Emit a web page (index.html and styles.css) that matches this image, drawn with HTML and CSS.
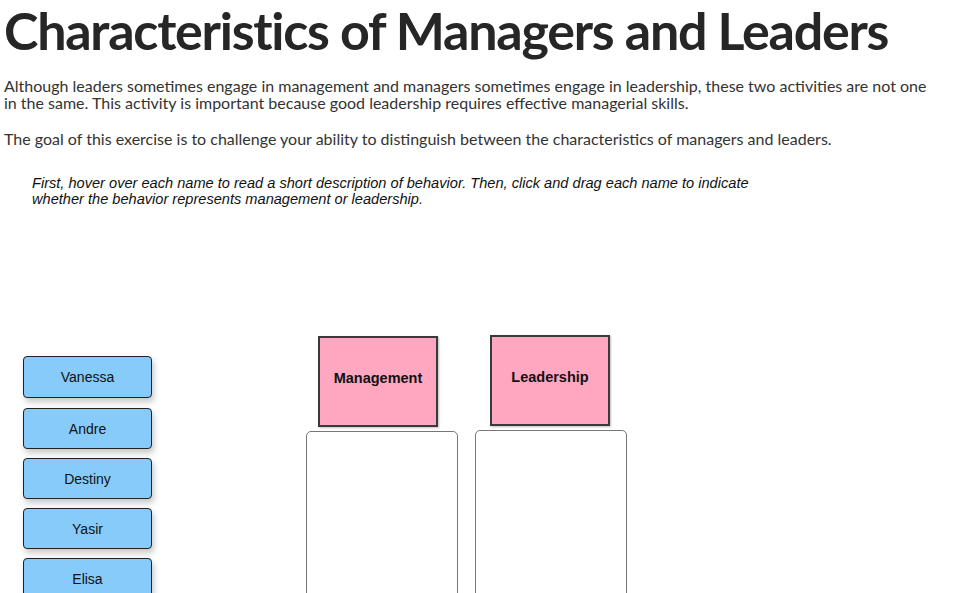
FILE: index.html
```html
<!DOCTYPE html>
<html>
<head>
<meta charset="utf-8">
<link rel="stylesheet" href="styles.css">
</head>
<body>
<h1 class="title">Characteristics of Managers and Leaders</h1>
<p class="intro">Although leaders sometimes engage in management and managers sometimes engage in leadership, these two activities are not one in the same. This activity is important because good leadership requires effective managerial skills.</p>
<p class="intro goal">The goal of this exercise is to challenge your ability to distinguish between the characteristics of managers and leaders.</p>
<p class="instructions">First, hover over each name to read a short description of behavior. Then, click and drag each name to indicate whether the behavior represents management or leadership.</p>
<div class="stage">
  <div class="names">
    <div class="name first">Vanessa</div>
    <div class="name">Andre</div>
    <div class="name">Destiny</div>
    <div class="name">Yasir</div>
    <div class="name">Elisa</div>
  </div>
  <div class="category cat-management">
    <div class="cat-head mgmt"><span>Management</span></div>
    <div class="drop"></div>
  </div>
  <div class="category cat-leadership">
    <div class="cat-head lead"><span>Leadership</span></div>
    <div class="drop"></div>
  </div>
</div>
</body>
</html>
```
FILE: styles.css
```css
html, body {
  margin: 0;
  padding: 0;
  background: #ffffff;
  overflow: hidden;
}
body {
  padding: 0 4px;
  font-family: "Lato", "Open Sans", sans-serif;
  color: #333333;
}
.title {
  margin: 0;
  font-family: "Lato", sans-serif;
  font-weight: 700;
  font-size: 52px;
  line-height: 60px;
  color: #262626;
  letter-spacing: -1.25px;
  font-variant-ligatures: none;
}
.intro {
  margin: 17px 0 0 0;
  font-size: 16px;
  line-height: 17px;
  width: 935px;
}
.goal {
  margin-top: 19px;
}
.instructions {
  margin: 28px 0 0 28px;
  width: 735px;
  font-family: "Liberation Sans", Arial, sans-serif;
  font-style: italic;
  font-size: 14.6px;
  line-height: 16px;
  color: #111111;
}
.stage {
  display: flex;
  align-items: flex-start;
  margin-top: 129px;
}
.names {
  display: flex;
  flex-direction: column;
  gap: 9px;
  margin: 20px 0 0 19px;
}
.name {
  box-sizing: border-box;
  width: 129px;
  height: 41px;
  background: #87cbfb;
  border: 1px solid #222222;
  border-radius: 4px;
  box-shadow: 2px 4px 6px rgba(0, 0, 0, 0.22);
  display: flex;
  align-items: center;
  justify-content: center;
  font-family: "Liberation Sans", Arial, sans-serif;
  font-size: 14px;
  color: #111111;
}
.name.first {
  height: 42px;
  margin-bottom: 1px;
}
.category {
  display: flex;
  flex-direction: column;
  align-items: flex-start;
  width: 152px;
}
.cat-management {
  margin-left: 154px;
}
.cat-leadership {
  margin-left: 17px;
  margin-top: -1px;
}
.cat-head {
  box-sizing: border-box;
  width: 120px;
  height: 91px;
  background: #ffa6c1;
  border: 2px solid #3a3a3a;
  box-shadow: 1px 1px 2px rgba(0, 0, 0, 0.25);
  display: flex;
  align-items: center;
  justify-content: center;
  font-family: "Liberation Sans", Arial, sans-serif;
  font-weight: 700;
  font-size: 14.5px;
  color: #111111;
}
.cat-head.mgmt {
  margin-left: 12px;
  padding-bottom: 8px;
}
.cat-head.lead {
  margin-left: 15px;
  align-items: flex-start;
  padding-top: 32px;
}
.drop {
  box-sizing: border-box;
  width: 152px;
  height: 200px;
  margin-top: 4px;
  border: 1px solid #777777;
  border-radius: 5px;
  background: #ffffff;
}
```
